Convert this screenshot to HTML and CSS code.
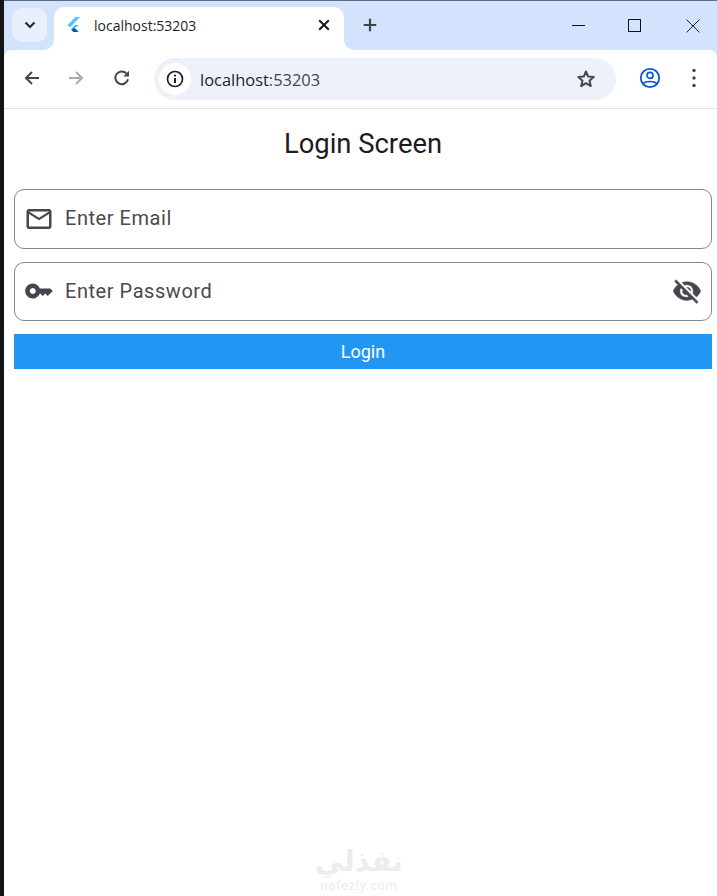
FILE: index.html
```html
<!DOCTYPE html>
<html lang="en">
<head>
<meta charset="utf-8">
<title>Login Screen</title>
<link rel="stylesheet" href="styles.css">
</head>
<body>
<div class="strip"></div>
<div class="window">
  <div class="tabbar">
    <div class="tabsearch">
      <svg width="16" height="16" viewBox="0 0 16 16"><path d="M3.500 5.500 8 10l4.500-4.500" fill="none" stroke="#1f2a3c" stroke-width="2.200"/></svg>
    </div>
    <div class="tab">
      <svg class="favicon" width="16" height="18" viewBox="0 0 16 18"><path d="M9.500 1 1.500 9l2.500 2.500L14 1z" fill="#54c5f8"/><path d="M9.500 9 4.800 13.200 7.500 16H12.500L8.500 12 12.500 9z" fill="#29b6f6"/><path d="M7.500 16 5.600 14 8.500 12 12.500 16z" fill="#01579b"/></svg>
      <span class="tabtitle">localhost:53203</span>
      <svg class="tabclose" width="12" height="12" viewBox="0 0 12 12"><path d="M1.200 1.200 10.800 10.800M10.800 1.200 1.200 10.800" stroke="#1b1b1f" stroke-width="2"/></svg>
    </div>
    <svg class="newtab" width="16" height="16" viewBox="0 0 16 16"><path d="M8 1.700v12.600M1.700 8h12.600" stroke="#3c4743" stroke-width="2.200"/></svg>
    <div class="wincontrols">
      <svg class="winmin" width="14" height="14" viewBox="0 0 14 14"><path d="M0 6.500H13" stroke="#111" stroke-width="1"/></svg>
      <svg width="14" height="14" viewBox="0 0 14 14"><rect x=".5" y=".5" width="12" height="12" fill="none" stroke="#111"/></svg>
      <svg width="14" height="14" viewBox="0 0 14 14"><path d="M.5.500l13 13M13.500.500l-13 13" stroke="#222" stroke-width="1"/></svg>
    </div>
  </div>
  <div class="toolbar">
    <svg class="back" width="18" height="18" viewBox="0 0 18 18"><path d="M16 9H3M9 3 3 9l6 6" fill="none" stroke="#444746" stroke-width="2"/></svg>
    <svg class="forward" width="18" height="18" viewBox="0 0 18 18"><path d="M2 9H15M9 3l6 6-6 6" fill="none" stroke="#a9abab" stroke-width="2"/></svg>
    <svg class="reload" width="18" height="18" viewBox="0 0 18 18"><path d="M15 10.200A6.400 6.400 0 1 1 13.300 4.300" fill="none" stroke="#444746" stroke-width="2"/><path d="M16 1.800V7.500H10.300z" fill="#444746"/></svg>
    <div class="omnibox">
      <div class="siteinfo">
        <svg width="20" height="20" viewBox="0 0 20 20"><circle cx="10" cy="10" r="7.500" fill="none" stroke="#1f1f1f" stroke-width="1.700"/><path d="M10 9v5" stroke="#1f1f1f" stroke-width="2"/><circle cx="10" cy="6.600" r="1.150" fill="#1f1f1f"/></svg>
      </div>
      <span class="url">localhost<span class="urlport">:53203</span></span>
      <svg class="star" width="20" height="20" viewBox="0 0 20 20"><path d="m10 2.500 2.200 5.100 5.500.5-4.200 3.600 1.300 5.400L10 14.200l-4.800 2.900 1.300-5.400-4.200-3.600 5.500-.5z" fill="none" stroke="#444746" stroke-width="2" stroke-linejoin="round"/></svg>
    </div>
    <svg class="profile" width="22" height="22" viewBox="0 0 22 22"><circle cx="11" cy="11" r="9.200" fill="none" stroke="#0b57d0" stroke-width="1.800"/><circle cx="11" cy="8.400" r="3" fill="none" stroke="#0b57d0" stroke-width="1.700"/><path d="M4.500 16.500C6 13.800 16 13.800 17.500 16.500" fill="none" stroke="#0b57d0" stroke-width="1.700"/></svg>
    <svg class="menu" width="4" height="18" viewBox="0 0 4 18"><circle cx="2" cy="1.500" r="1.700" fill="#444746"/><circle cx="2" cy="9" r="1.700" fill="#444746"/><circle cx="2" cy="16.500" r="1.700" fill="#444746"/></svg>
  </div>
  <main class="page">
    <h1 class="title">Login Screen</h1>
    <form class="form">
      <div class="field">
        <svg class="fieldicon" width="30" height="30" viewBox="0 0 24 24"><path d="M22 6c0-1.100-.9-2-2-2H4c-1.100 0-2 .9-2 2v12c0 1.100.9 2 2 2h16c1.100 0 2-.9 2-2V6zm-2 0-8 5-8-5h16zm0 12H4V8l8 5 8-5v10z" fill="#49454f"/></svg>
        <span class="placeholder">Enter Email</span>
      </div>
      <div class="field">
        <svg class="fieldicon" width="30" height="30" viewBox="0 0 24 24"><path fill-rule="evenodd" d="M21 10h-8.350C11.830 7.670 9.610 6 7 6c-3.310 0-6 2.690-6 6s2.690 6 6 6c2.610 0 4.830-1.670 5.650-4H13l2 2 2-2 2 2 4-4.040L21 10zM7 14.400c-1.320 0-2.400-1.080-2.400-2.400s1.080-2.400 2.400-2.400 2.400 1.080 2.400 2.400-1.080 2.400-2.400 2.400z" fill="#49454f"/></svg>
        <span class="placeholder">Enter Password</span>
        <svg class="visibility" width="30" height="30" viewBox="0 0 24 24"><path d="M12 7c2.760 0 5 2.240 5 5 0 .65-.13 1.260-.36 1.830l2.920 2.920c1.510-1.260 2.700-2.890 3.430-4.750-1.730-4.390-6-7.500-11-7.500-1.400 0-2.740.25-3.980.7l2.160 2.160C10.740 7.130 11.350 7 12 7zM2 4.270l2.280 2.280.46.46C3.080 8.300 1.780 10.020 1 12c1.730 4.390 6 7.500 11 7.500 1.550 0 3.030-.3 4.380-.84l.42.42L19.730 22 21 20.730 3.270 3 2 4.270zM7.530 9.800l1.550 1.550c-.05.21-.8.430-.8.650 0 1.660 1.340 3 3 3 .22 0 .44-.03.650-.08l1.550 1.550c-.67.330-1.410.53-2.200.53-2.760 0-5-2.240-5-5 0-.79.200-1.530.530-2.200zm4.310-.78 3.150 3.150.02-.16c0-1.660-1.340-3-3-3l-.17.010z" fill="#49454f" stroke="#49454f" stroke-width=".35"/></svg>
      </div>
      <button class="login" type="button">Login</button>
    </form>
    <div class="watermark">
      <div class="wm-ar" lang="ar" dir="rtl">نفذلي</div>
      <div class="wm-en">nafezly.com</div>
    </div>
  </main>
</div>
</body>
</html>
```

FILE: styles.css
```css
* { box-sizing: border-box; }
html, body { margin: 0; height: 100%; overflow: hidden; }
body {
  display: flex;
  width: 717px;
  height: 896px;
  background: #fff;
  font-family: Roboto, "Noto Sans", sans-serif;
}
.strip { width: 4px; flex: none; background: #141414; }
.window {
  flex: 1;
  min-width: 0;
  display: flex;
  flex-direction: column;
  background: #d3e3fd;
}

.tabbar {
  height: 50px;
  flex: none;
  display: flex;
  align-items: flex-start;
  border-top: 1px solid #5f6c85;
  padding: 6px 0 0 8px;
}
.tabsearch {
  width: 35px;
  height: 34px;
  margin-top: 1px;
  border-radius: 10px;
  background: #e8f0fe;
  display: flex;
  align-items: center;
  justify-content: center;
}
.tab {
  position: relative;
  width: 290px;
  height: 43px;
  margin-left: 7px;
  border-radius: 10px 10px 0 0;
  background: #fff;
  display: flex;
  align-items: center;
  padding: 0 14px 7px 12px;
}
.tab::before,
.tab::after {
  content: "";
  position: absolute;
  bottom: 0;
  width: 10px;
  height: 10px;
}
.tab::before {
  left: -10px;
  background: radial-gradient(circle at 0 0, transparent 9.500px, #fff 10px);
}
.tab::after {
  right: -10px;
  background: radial-gradient(circle at 100% 0, transparent 9.500px, #fff 10px);
}
.favicon { flex: none; }
.tabtitle {
  margin: 1px 0 0 12px;
  flex: 1;
  font-family: "Open Sans", Roboto, sans-serif;
  font-size: 14px;
  color: #1f1f1f;
}
.tabclose { flex: none; }
.newtab { margin: 10px 0 0 18px; flex: none; }
.wincontrols {
  margin: 12px 17px 0 auto;
  display: flex;
  gap: 44px;
}
.winmin { margin-right: -2px; }

.toolbar {
  height: 59px;
  flex: none;
  display: flex;
  align-items: center;
  background: #fff;
  border-radius: 8px 8px 0 0;
  border-bottom: 1px solid #e1e3e6;
  padding: 0 0 1px 0;
}
.toolbar > svg { margin-bottom: 2px; }
.back { margin-left: 19px; flex: none; }
.forward { margin-left: 26px; flex: none; }
.reload { margin-left: 28px; flex: none; }
.omnibox {
  width: 462px;
  height: 42px;
  margin-left: 23px;
  border-radius: 21px;
  background: #edf2fa;
  display: flex;
  align-items: center;
  padding: 0 20px 0 5px;
}
.siteinfo {
  width: 32px;
  height: 32px;
  border-radius: 50%;
  background: #fff;
  display: flex;
  align-items: center;
  justify-content: center;
}
.url {
  margin: 2px 0 0 9px;
  flex: 1;
  font-family: "Open Sans", Roboto, sans-serif;
  font-size: 16.450px;
  color: #1f1f1f;
}
.urlport { color: #444746; }
.star { flex: none; }
.profile { margin-left: 23px; flex: none; }
.menu { margin-left: 31px; flex: none; }

.page {
  flex: 1;
  min-height: 0;
  display: flex;
  flex-direction: column;
  position: relative;
  padding: 0 5px 0 10px;
  background: #fff;
}
.title {
  margin: 17px 0 0;
  height: 36px;
  font-size: 27.400px;
  font-weight: 400;
  line-height: 36px;
  text-align: center;
  color: #1c1b1f;
}
.form {
  margin-top: 27px;
  display: flex;
  flex-direction: column;
  gap: 13px;
}
.field {
  height: 59.500px;
  border: 1.500px solid #86848a;
  border-radius: 10px;
  display: flex;
  align-items: center;
  padding: 0 9px 0 9px;
}
.fieldicon { flex: none; }
.placeholder {
  margin-left: 11px;
  padding-bottom: 1px;
  flex: 1;
  font-size: 20px;
  letter-spacing: .55px;
  color: #4b494f;
}
.visibility { flex: none; }
.login {
  display: block;
  width: 100%;
  height: 35px;
  border: 0;
  border-radius: 0;
  background: #2196f3;
  color: #fff;
  font: 400 18px Roboto, sans-serif;
  padding: 0;
}
.watermark {
  position: absolute;
  left: 295px;
  top: 735px;
  width: 120px;
  text-align: center;
  color: #ececec;
}
.wm-ar { font: 700 28.700px/34px "DejaVu Sans", sans-serif; }
.wm-en { font: 400 13px/15px Roboto, sans-serif; letter-spacing: .7px; }
```
